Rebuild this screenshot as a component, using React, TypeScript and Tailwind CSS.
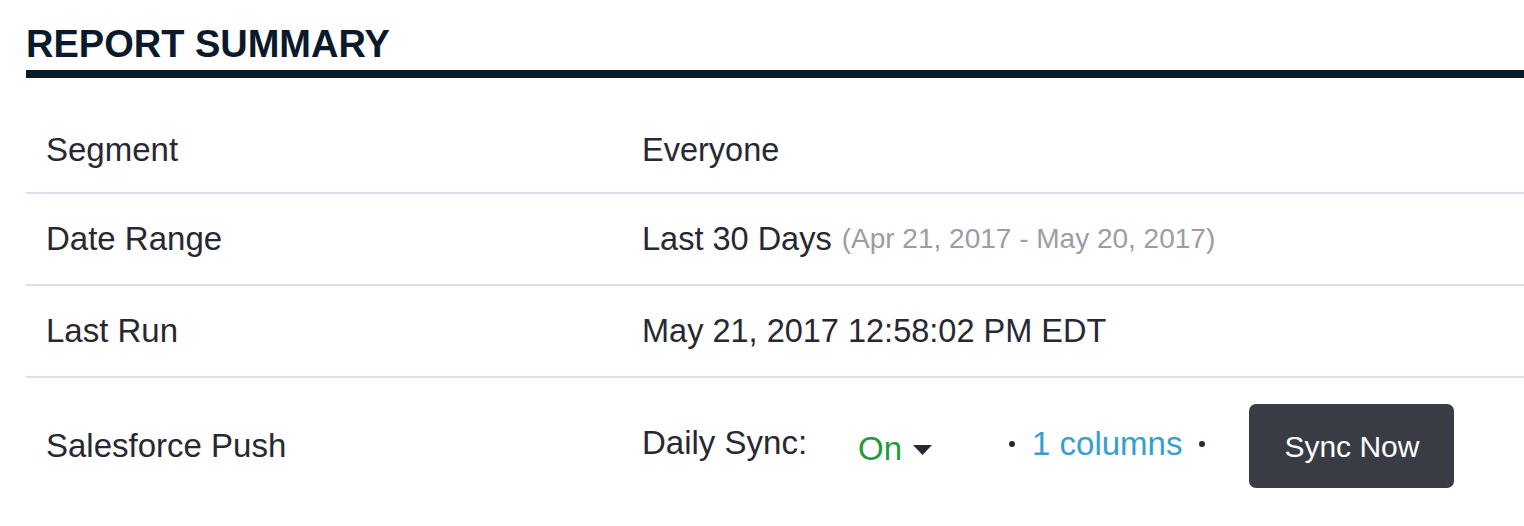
const font = { fontFamily: '"Liberation Sans", Arial, sans-serif' };

function Row({
  label,
  children,
  height = "h-[92px]",
}: {
  label: string;
  children: React.ReactNode;
  height?: string;
}) {
  return (
    <div className={`flex items-center border-b-2 border-[#dcdee8] ${height}`}>
      <div className="w-[616px] shrink-0 pl-5 text-[33px] text-[#272833]">{label}</div>
      <div className="flex flex-1 items-center text-[32.5px] text-[#272833]">{children}</div>
    </div>
  );
}

function Dot() {
  return <span className="block h-[6px] w-[6px] shrink-0 rounded-full bg-[#272833]" />;
}

export default function App() {
  return (
    <div className="min-h-screen bg-white pl-[26px] pt-[25px]" style={font}>
      <h1 className="text-[38px] font-bold leading-[38px] text-[#0b1a2b]">REPORT SUMMARY</h1>
      <div className="mt-[7px] h-2 bg-[#0b1a2b]" />

      <div className="mt-[30px]">
        <Row label="Segment" height="h-[86px]">Everyone</Row>
        <Row label="Date Range">
          Last 30 Days
          <span className="ml-[10px] text-[28px] text-[#9b9da4]">(Apr 21, 2017 - May 20, 2017)</span>
        </Row>
        <Row label="Last Run">May 21, 2017 12:58:02 PM EDT</Row>
        <div className="flex h-[136px] items-center">
          <div className="w-[616px] shrink-0 pl-5 text-[33px] text-[#272833]">Salesforce Push</div>
          <div className="flex items-center text-[33px] text-[#272833]">
            <span className="w-[216px] shrink-0 -mt-[6px]">Daily Sync:</span>
            <span className="mt-[6px] flex items-center text-[#1f9a3b]">
              On
              <svg width="19" height="10" viewBox="0 0 19 10" className="ml-[11px] mt-[2px]">
                <path d="M0 0 L19 0 L9.5 10 Z" fill="#272833" />
              </svg>
            </span>
            <span className="ml-[77px] -mt-[4px] flex items-center">
              <Dot />
              <span className="ml-[17px] text-[#34a0cd]">1 columns</span>
              <span className="ml-[17px]">
                <Dot />
              </span>
            </span>
            <button className="ml-[44px] flex h-[84px] w-[205px] items-center justify-center rounded-[7px] bg-[#393c45] text-[30px] text-white">
              Sync Now
            </button>
          </div>
        </div>
      </div>
    </div>
  );
}
